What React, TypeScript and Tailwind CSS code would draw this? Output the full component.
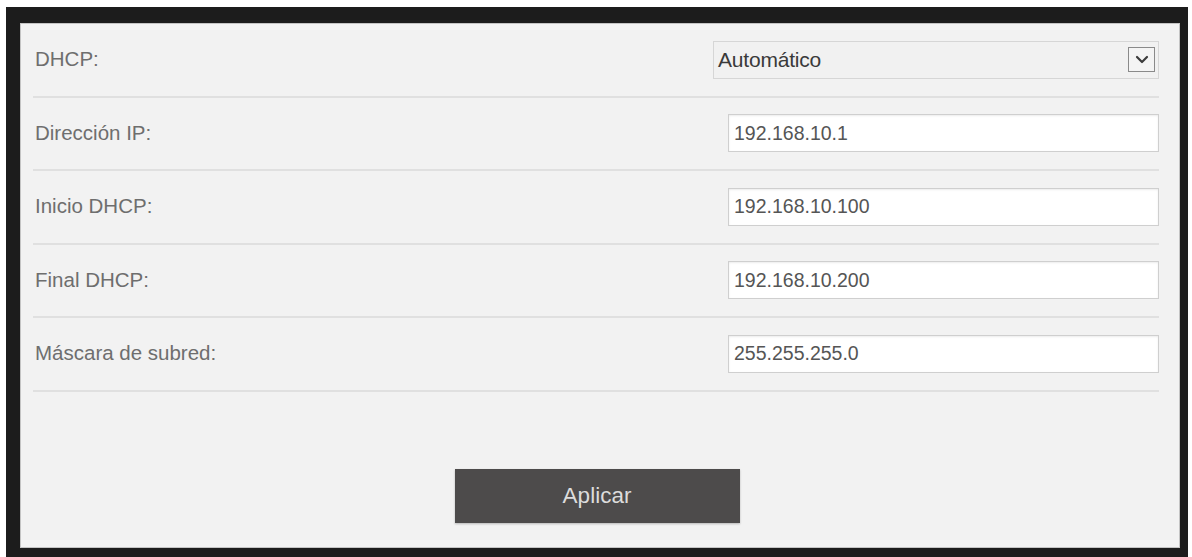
import { useState } from "react";

type Field = { label: string; value: string };

const fields: Field[] = [
  { label: "Dirección IP:", value: "192.168.10.1" },
  { label: "Inicio DHCP:", value: "192.168.10.100" },
  { label: "Final DHCP:", value: "192.168.10.200" },
  { label: "Máscara de subred:", value: "255.255.255.0" },
];

function Row({ label, children }: { label: string; children: React.ReactNode }) {
  return (
    <div className="flex h-[73.5px] shrink-0 items-center justify-between border-b-2 border-[#e0e0e0]">
      <span className="pl-[2px] text-[20.5px] text-[#6e6e6e]">{label}</span>
      {children}
    </div>
  );
}

export default function App() {
  const [mode] = useState("Automático");

  return (
    <div className="h-[557px] overflow-hidden bg-white pl-[6px] pt-[7px] pr-[4px]" style={{ fontFamily: '"Liberation Sans", Arial, sans-serif' }}>
      <div className="h-[570px] bg-[#1c1c1c] pl-[14px] pt-[16px] pr-[8px]">
        <div className="flex h-[525px] flex-col border border-[#c4c4c4] bg-[#f2f2f2] pl-[12px] pr-[20px]">
          <Row label="DHCP:">
            <div className="flex h-[38px] w-[446px] items-center justify-between border border-[#d6d6d6] bg-[#f1f1f1] pl-[4px] pr-[3px]">
              <span className="text-[21px] tracking-[-0.2px] text-[#3a3a3a]">{mode}</span>
              <span className="flex h-[25px] w-[27px] items-center justify-center border border-[#8a8a8a] bg-[#f4f4f4]">
                <svg width="14" height="9" viewBox="0 0 14 9" fill="none">
                  <path d="M2 2l5 5 5-5" stroke="#3c3c3c" strokeWidth="2.2" strokeLinecap="round" strokeLinejoin="round" />
                </svg>
              </span>
            </div>
          </Row>

          {fields.map((f) => (
            <Row key={f.label} label={f.label}>
              <div className="flex h-[38px] w-[431px] items-center border border-[#cfcfcf] bg-white pl-[5px] shadow-[inset_0_1px_2px_rgba(0,0,0,0.08)]">
                <span className="text-[19.5px] text-[#555555]">{f.value}</span>
              </div>
            </Row>
          ))}

          <div className="flex flex-1 items-end justify-center pb-[24px] pl-[2px]">
            <button className="h-[54px] w-[285px] bg-[#4d4b4b] text-[22.5px] text-[#dcdcdc] shadow-[0_1px_2px_rgba(0,0,0,0.25)]">
              Aplicar
            </button>
          </div>
        </div>
      </div>
    </div>
  );
}
